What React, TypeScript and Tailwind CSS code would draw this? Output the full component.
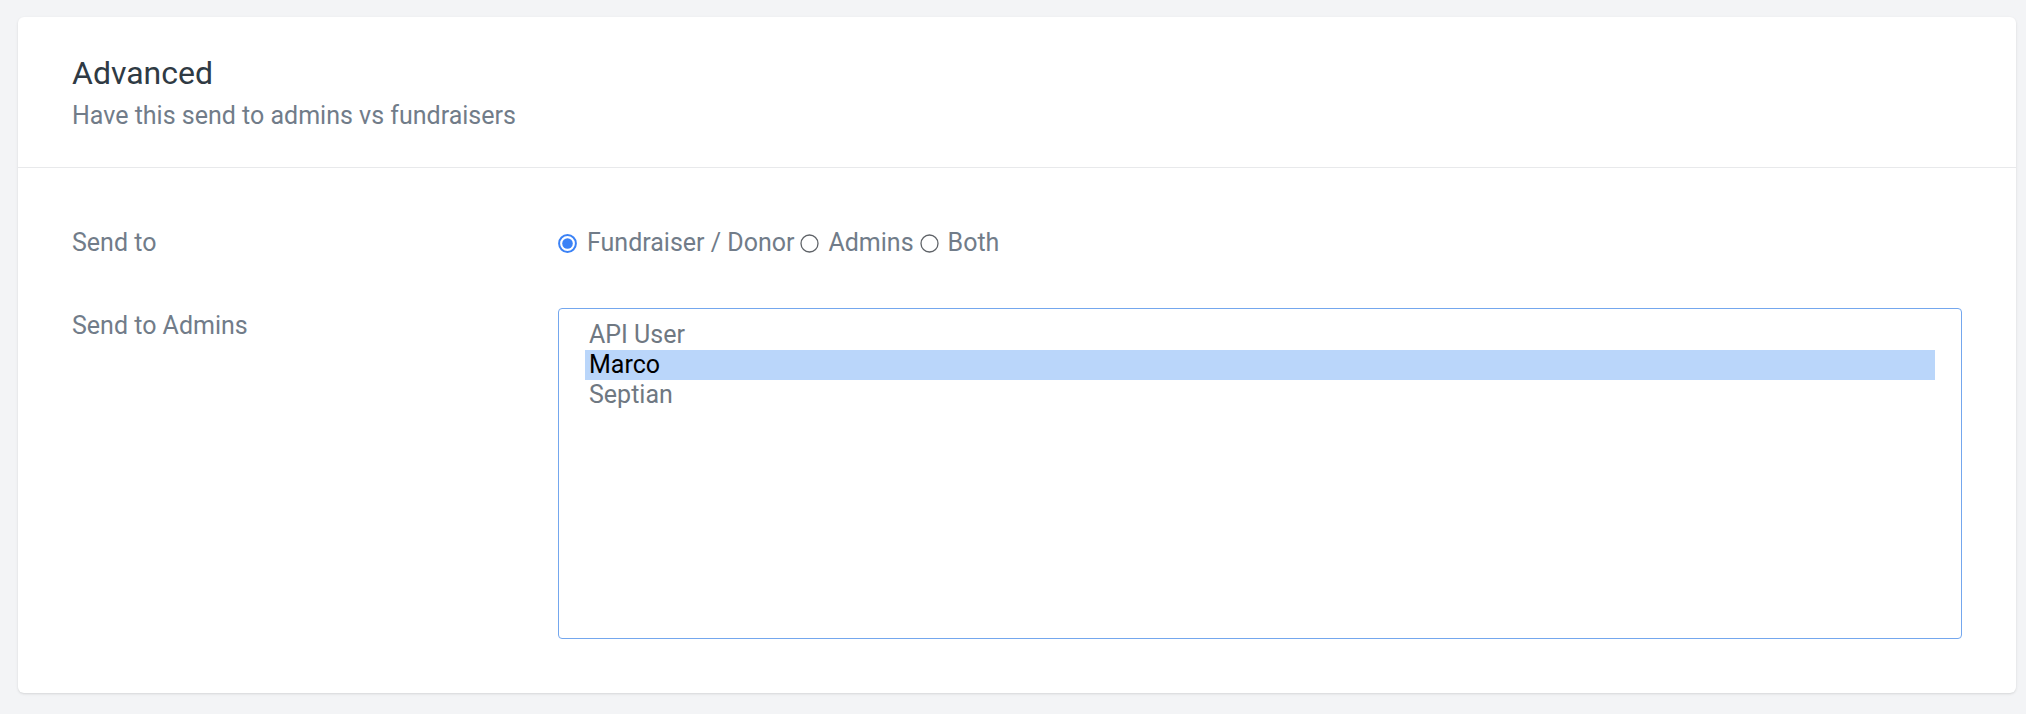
import React from "react";

function Radio({ checked }: { checked?: boolean }) {
  return checked ? (
    <svg width="19" height="19" viewBox="0 0 19 19" className="shrink-0">
      <circle cx="9.5" cy="9.5" r="8.4" fill="white" stroke="#3b82f6" strokeWidth="2" />
      <circle cx="9.5" cy="9.5" r="5.3" fill="#3b82f6" />
    </svg>
  ) : (
    <svg width="19" height="19" viewBox="0 0 19 19" className="shrink-0">
      <circle cx="9.5" cy="9.5" r="8.5" fill="white" stroke="#5f6368" strokeWidth="1.3" />
    </svg>
  );
}

const admins = ["API User", "Marco", "Septian"];

export default function App() {
  return (
    <div className="min-h-screen bg-[#f3f4f6] pt-[17px] pb-[20px] pl-[18px] pr-[10px] font-['Roboto',sans-serif]">
      <div className="bg-white rounded-md shadow-sm">
        <div className="px-[54px] pt-[36px] pb-[34px] border-b border-[#e8e9eb]">
          <h2 className="text-[32px] leading-[40px] text-[#2f3a44]">Advanced</h2>
          <p className="mt-[6px] text-[25px] leading-[34px] text-[#717c89]">
            Have this send to admins vs fundraisers
          </p>
        </div>

        <div className="px-[54px] pt-[57px] pb-[54px]">
          <div className="flex">
            <div className="w-[486px] shrink-0 text-[25px] leading-[36px] text-[#717c89]">Send to</div>
            <div className="flex items-center text-[25px] leading-[36px] text-[#717c89]">
              <Radio checked />
              <span className="ml-[10px] mr-[6px]">Fundraiser / Donor</span>
              <Radio />
              <span className="ml-[9px] mr-[6px]">Admins</span>
              <Radio />
              <span className="ml-[9px]">Both</span>
            </div>
          </div>

          <div className="flex mt-[47px]">
            <div className="w-[486px] shrink-0 text-[25px] leading-[36px] text-[#717c89]">Send to Admins</div>
            <div className="flex-1 h-[331px] border border-[#74a7ee] rounded-[4px] pt-[11px] px-[26px]">
              {admins.map((name) => (
                <div
                  key={name}
                  className={
                    name === "Marco"
                      ? "h-[30px] leading-[30px] px-[4px] text-[25px] bg-[#bad6fa] text-black"
                      : "h-[30px] leading-[30px] px-[4px] text-[25px] text-[#6f7882]"
                  }
                >
                  {name}
                </div>
              ))}
            </div>
          </div>
        </div>
      </div>
    </div>
  );
}
